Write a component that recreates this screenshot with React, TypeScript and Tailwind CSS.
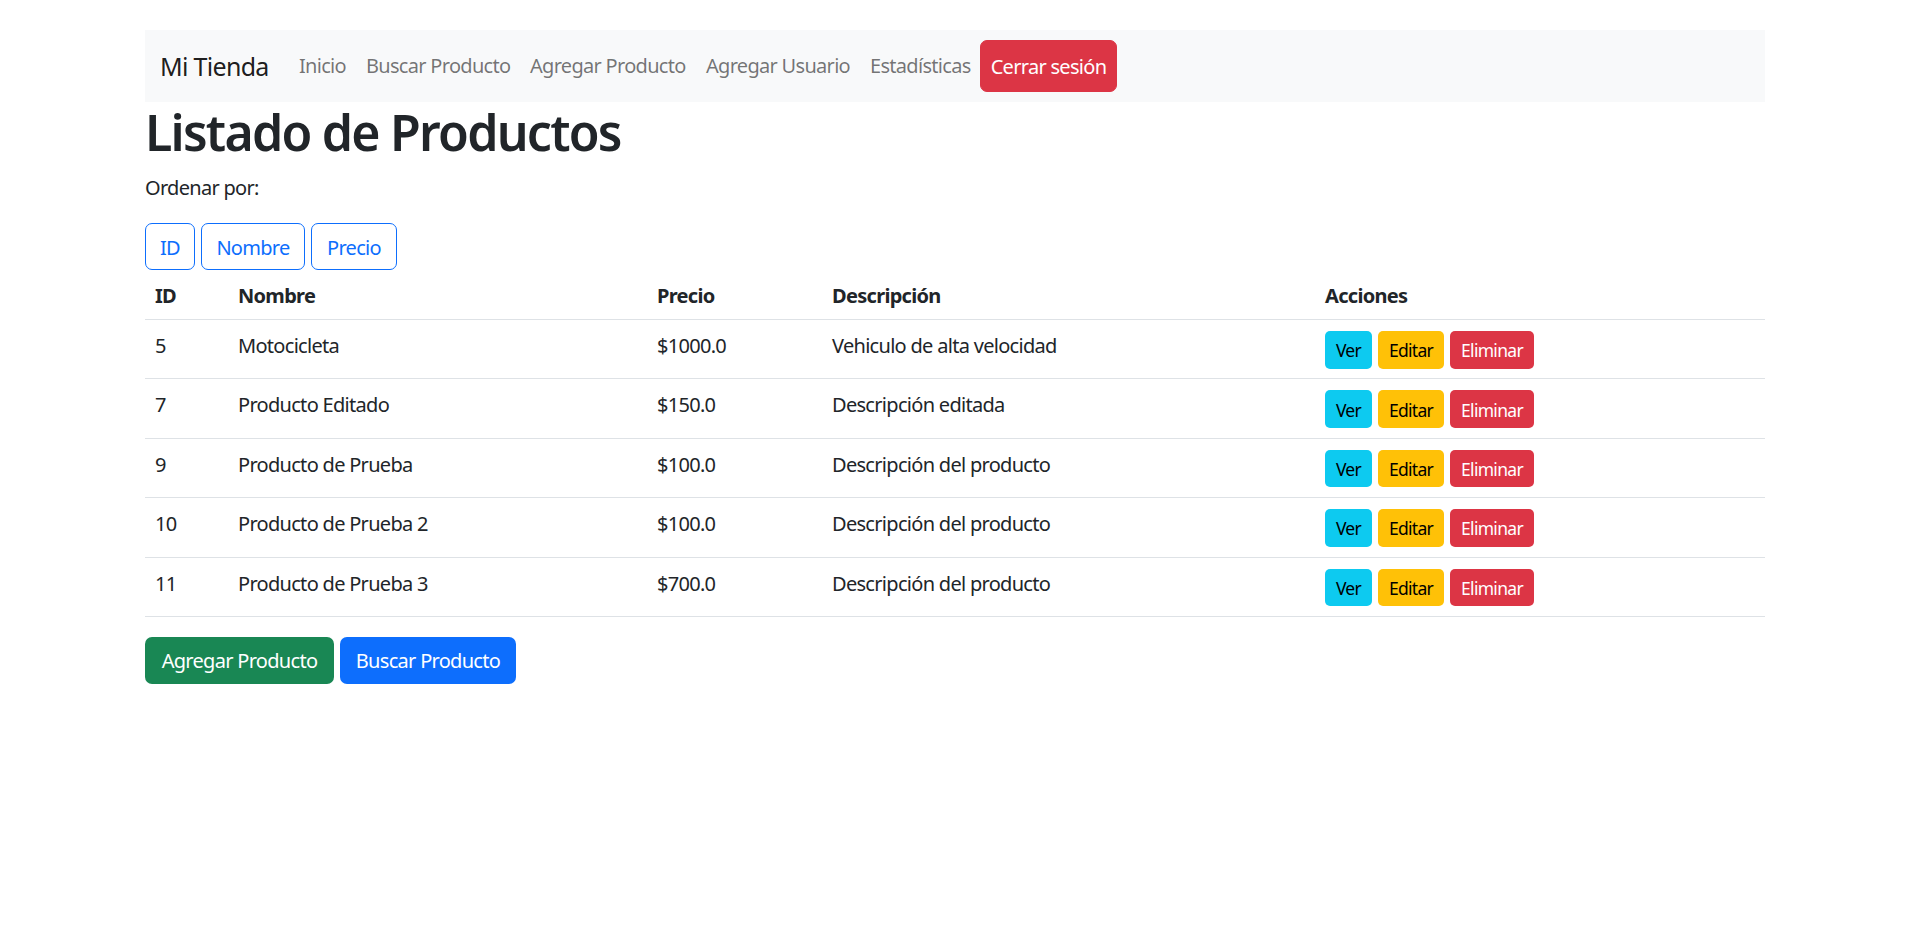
import React from "react";

const rows = [
  { id: "5", nombre: "Motocicleta", precio: "$1000.0", desc: "Vehiculo de alta velocidad" },
  { id: "7", nombre: "Producto Editado", precio: "$150.0", desc: "Descripción editada" },
  { id: "9", nombre: "Producto de Prueba", precio: "$100.0", desc: "Descripción del producto" },
  { id: "10", nombre: "Producto de Prueba 2", precio: "$100.0", desc: "Descripción del producto" },
  { id: "11", nombre: "Producto de Prueba 3", precio: "$700.0", desc: "Descripción del producto" },
];

const cols = "grid grid-cols-[83px_419px_175px_493px_450px]";

export default function App() {
  return (
    <div
      className="min-h-screen bg-white text-[#212529] text-[20px] leading-[30px] tracking-[-0.035em]"
      style={{ fontFamily: '"Segoe UI", "Noto Sans", "Open Sans", Arial, sans-serif' }}
    >
      <div className="mx-auto w-[1620px] pt-[30px]">
        {/* Navbar */}
        <nav className="flex items-center bg-[#f8f9fa] px-[15px] py-[10px] h-[72px]">
          <a className="w-[109px] mr-[20px] text-[25px] leading-[37px] text-[rgba(0,0,0,0.9)] whitespace-nowrap">
            Mi Tienda
          </a>
          <div className="flex items-center">
            <a className="w-[67px] px-[10px] py-[10px] text-[rgba(0,0,0,0.55)] whitespace-nowrap">Inicio</a>
            <a className="w-[164px] px-[10px] py-[10px] text-[rgba(0,0,0,0.55)] whitespace-nowrap">Buscar Producto</a>
            <a className="w-[176px] px-[10px] py-[10px] text-[rgba(0,0,0,0.55)] whitespace-nowrap">Agregar Producto</a>
            <a className="w-[164px] px-[10px] py-[10px] text-[rgba(0,0,0,0.55)] whitespace-nowrap">Agregar Usuario</a>
            <a className="w-[120px] px-[10px] py-[10px] text-[rgba(0,0,0,0.55)] whitespace-nowrap">Estadísticas</a>
            <button className="w-[137px] h-[52px] pt-[2px] flex items-center justify-center rounded-[7px] bg-[#dc3545] border border-[#dc3545] text-white whitespace-nowrap">
              Cerrar sesión
            </button>
          </div>
        </nav>

        <h1 className="text-[50px] leading-[60px] font-semibold tracking-[-0.035em] mb-[10px]">Listado de Productos</h1>
        <p className="mb-[20px] pt-[1px]">Ordenar por:</p>

        <div className="flex gap-[6px]">
          <button className="w-[50px] h-[47px] pt-[2px] flex items-center justify-center rounded-[7px] border border-[#0d6efd] text-[#0d6efd]">ID</button>
          <button className="w-[104px] h-[47px] pt-[2px] flex items-center justify-center rounded-[7px] border border-[#0d6efd] text-[#0d6efd]">Nombre</button>
          <button className="w-[86px] h-[47px] pt-[2px] flex items-center justify-center rounded-[7px] border border-[#0d6efd] text-[#0d6efd]">Precio</button>
        </div>

        {/* Table */}
        <div className="mb-[20px]">
          <div className={`${cols} h-[50px] border-b border-[#dee2e6] font-bold`}>
            <div className="px-[10px] pt-[11px]">ID</div>
            <div className="px-[10px] pt-[11px]">Nombre</div>
            <div className="px-[10px] pt-[11px]">Precio</div>
            <div className="px-[10px] pt-[11px]">Descripción</div>
            <div className="px-[10px] pt-[11px]">Acciones</div>
          </div>
          {rows.map((r) => (
            <div key={r.id} className={`${cols} h-[59.4px] border-b border-[#dee2e6]`}>
              <div className="px-[10px] pt-[11px]">{r.id}</div>
              <div className="px-[10px] pt-[11px]">{r.nombre}</div>
              <div className="px-[10px] pt-[11px]">{r.precio}</div>
              <div className="px-[10px] pt-[11px]">{r.desc}</div>
              <div className="px-[10px] pt-[11px] flex items-start gap-[6px] text-[17.5px] leading-[26px]">
                <button className="w-[47px] h-[37.5px] pt-[1px] flex items-center justify-center rounded-[5px] bg-[#0dcaf0] text-black">Ver</button>
                <button className="w-[66px] h-[37.5px] pt-[1px] flex items-center justify-center rounded-[5px] bg-[#ffc107] text-black">Editar</button>
                <button className="w-[84px] h-[37.5px] pt-[1px] flex items-center justify-center rounded-[5px] bg-[#dc3545] text-white">Eliminar</button>
              </div>
            </div>
          ))}
        </div>

        <div className="flex gap-[6px]">
          <button className="w-[189px] h-[47px] pt-[2px] flex items-center justify-center rounded-[7px] bg-[#198754] text-white whitespace-nowrap">Agregar Producto</button>
          <button className="w-[176px] h-[47px] pt-[2px] flex items-center justify-center rounded-[7px] bg-[#0d6efd] text-white whitespace-nowrap">Buscar Producto</button>
        </div>
      </div>
    </div>
  );
}
